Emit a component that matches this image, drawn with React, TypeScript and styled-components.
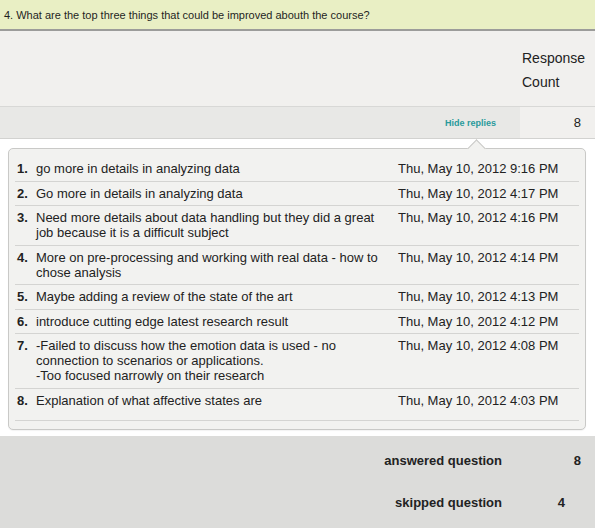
import React from 'react'
import styled, { createGlobalStyle } from 'styled-components'

const GlobalStyle = createGlobalStyle`
  html, body {
    margin: 0;
    padding: 0;
    background: #ffffff;
  }
  body {
    font-family: 'Liberation Sans', Arial, Helvetica, sans-serif;
    color: #222222;
  }
`

const Page = styled.div`
  width: 595px;
  height: 528px;
  overflow: hidden;
  background: #ffffff;
`

const QuestionBar = styled.div`
  display: flex;
  align-items: center;
  height: 29px;
  padding-left: 4px;
  background: #e9efc4;
  border-bottom: 2px solid #9c9c9a;
  font-size: 11px;
  color: #1f1f1f;
`

const HeadArea = styled.div`
  display: grid;
  grid-template-columns: 1fr 73px;
  height: 75px;
  background: #f1f0ee;
`

const HeadLabels = styled.div`
  grid-column: 2;
  display: flex;
  flex-direction: column;
  padding-top: 20px;
  gap: 9px;
  font-size: 14px;
  line-height: 15px;
  color: #222222;
`

const ToggleRow = styled.div`
  position: relative;
  display: grid;
  grid-template-columns: 1fr 75px;
  height: 31px;
  border-top: 1px solid #d8d8d6;
  border-bottom: 1px solid #d2d2d0;
`

const ToggleCell = styled.div<{ $light?: boolean }>`
  display: flex;
  align-items: center;
  justify-content: flex-end;
  padding-right: ${(p) => (p.$light ? '14px' : '24px')};
  background: ${(p) => (p.$light ? '#f1f0ee' : '#e8e8e6')};
`

const HideLink = styled.a`
  font-size: 9px;
  font-weight: bold;
  color: #2a9a9c;
  text-decoration: none;
  cursor: pointer;
`

const CountValue = styled.span`
  font-size: 13px;
  color: #222222;
`

const Popup = styled.div`
  position: relative;
  margin: 9px 9px 0 8px;
  padding: 8px 6px 8px 6px;
  background: #f2f2f0;
  border: 1px solid #c9c9c7;
  border-radius: 5px;
  box-shadow: 0 1px 1px rgba(0, 0, 0, 0.05);
`

const Pointer = styled.span`
  position: absolute;
  top: -7px;
  left: 461px;
  width: 12px;
  height: 12px;
  background: #f2f2f0;
  border-top: 1px solid #c9c9c7;
  border-left: 1px solid #c9c9c7;
  transform: rotate(45deg);
`

const ReplyRow = styled.div<{ $last?: boolean }>`
  display: grid;
  grid-template-columns: 21px 362px 1fr;
  padding: ${(p) => (p.$last ? '4px 0 12px' : '4px 0 4.5px')};
  border-bottom: 1px solid #d4d4d2;
  font-size: 13px;
  line-height: 15px;
  color: #222222;
`

const ReplyNum = styled.span`
  padding-left: 2px;
  font-weight: bold;
`

const ReplyText = styled.span`
  padding-right: 10px;
  white-space: pre-line;
`

const ReplyDate = styled.span`
  white-space: nowrap;
`

const Summary = styled.div`
  margin-top: 6px;
  padding-top: 4px;
  height: 100px;
  background: #dcdcda;
`

const SummaryRow = styled.div`
  display: grid;
  grid-template-columns: 1fr 93px;
  align-items: center;
  height: 42px;
  font-size: 13px;
  font-weight: bold;
  color: #222222;
`

const SummaryLabel = styled.span`
  text-align: right;
`

const SummaryValue = styled.span<{ $pad: number }>`
  text-align: right;
  padding-right: ${(p) => p.$pad}px;
`

type Reply = {
  text: string
  date: string
}

const replies: Reply[] = [
  { text: 'go more in details in analyzing data', date: 'Thu, May 10, 2012 9:16 PM' },
  { text: 'Go more in details in analyzing data', date: 'Thu, May 10, 2012 4:17 PM' },
  {
    text: 'Need more details about data handling but they did a great job because it is a difficult subject',
    date: 'Thu, May 10, 2012 4:16 PM'
  },
  {
    text: 'More on pre-processing and working with real data - how to chose analysis',
    date: 'Thu, May 10, 2012 4:14 PM'
  },
  { text: 'Maybe adding a review of the state of the art', date: 'Thu, May 10, 2012 4:13 PM' },
  { text: 'introduce cutting edge latest research result', date: 'Thu, May 10, 2012 4:12 PM' },
  {
    text: '-Failed to discuss how the emotion data is used - no connection to scenarios or applications.\n-Too focused narrowly on their research',
    date: 'Thu, May 10, 2012 4:08 PM'
  },
  { text: 'Explanation of what affective states are', date: 'Thu, May 10, 2012 4:03 PM' }
]

const App: React.FC = () => {
  return (
    <>
      <GlobalStyle />
      <Page>
        <QuestionBar>
          4. What are the top three things that could be improved abouth the course?
        </QuestionBar>
        <HeadArea>
          <HeadLabels>
            <span>Response</span>
            <span>Count</span>
          </HeadLabels>
        </HeadArea>
        <ToggleRow>
          <ToggleCell>
            <HideLink>Hide replies</HideLink>
          </ToggleCell>
          <ToggleCell $light>
            <CountValue>8</CountValue>
          </ToggleCell>
        </ToggleRow>
        <Popup>
          <Pointer />
          {replies.map((reply, idx) => (
            <ReplyRow key={idx} $last={idx === replies.length - 1}>
              <ReplyNum>{idx + 1}.</ReplyNum>
              <ReplyText>{reply.text}</ReplyText>
              <ReplyDate>{reply.date}</ReplyDate>
            </ReplyRow>
          ))}
        </Popup>
        <Summary>
          <SummaryRow>
            <SummaryLabel>answered question</SummaryLabel>
            <SummaryValue $pad={14}>8</SummaryValue>
          </SummaryRow>
          <SummaryRow>
            <SummaryLabel>skipped question</SummaryLabel>
            <SummaryValue $pad={30}>4</SummaryValue>
          </SummaryRow>
        </Summary>
      </Page>
    </>
  )
}

export default App
